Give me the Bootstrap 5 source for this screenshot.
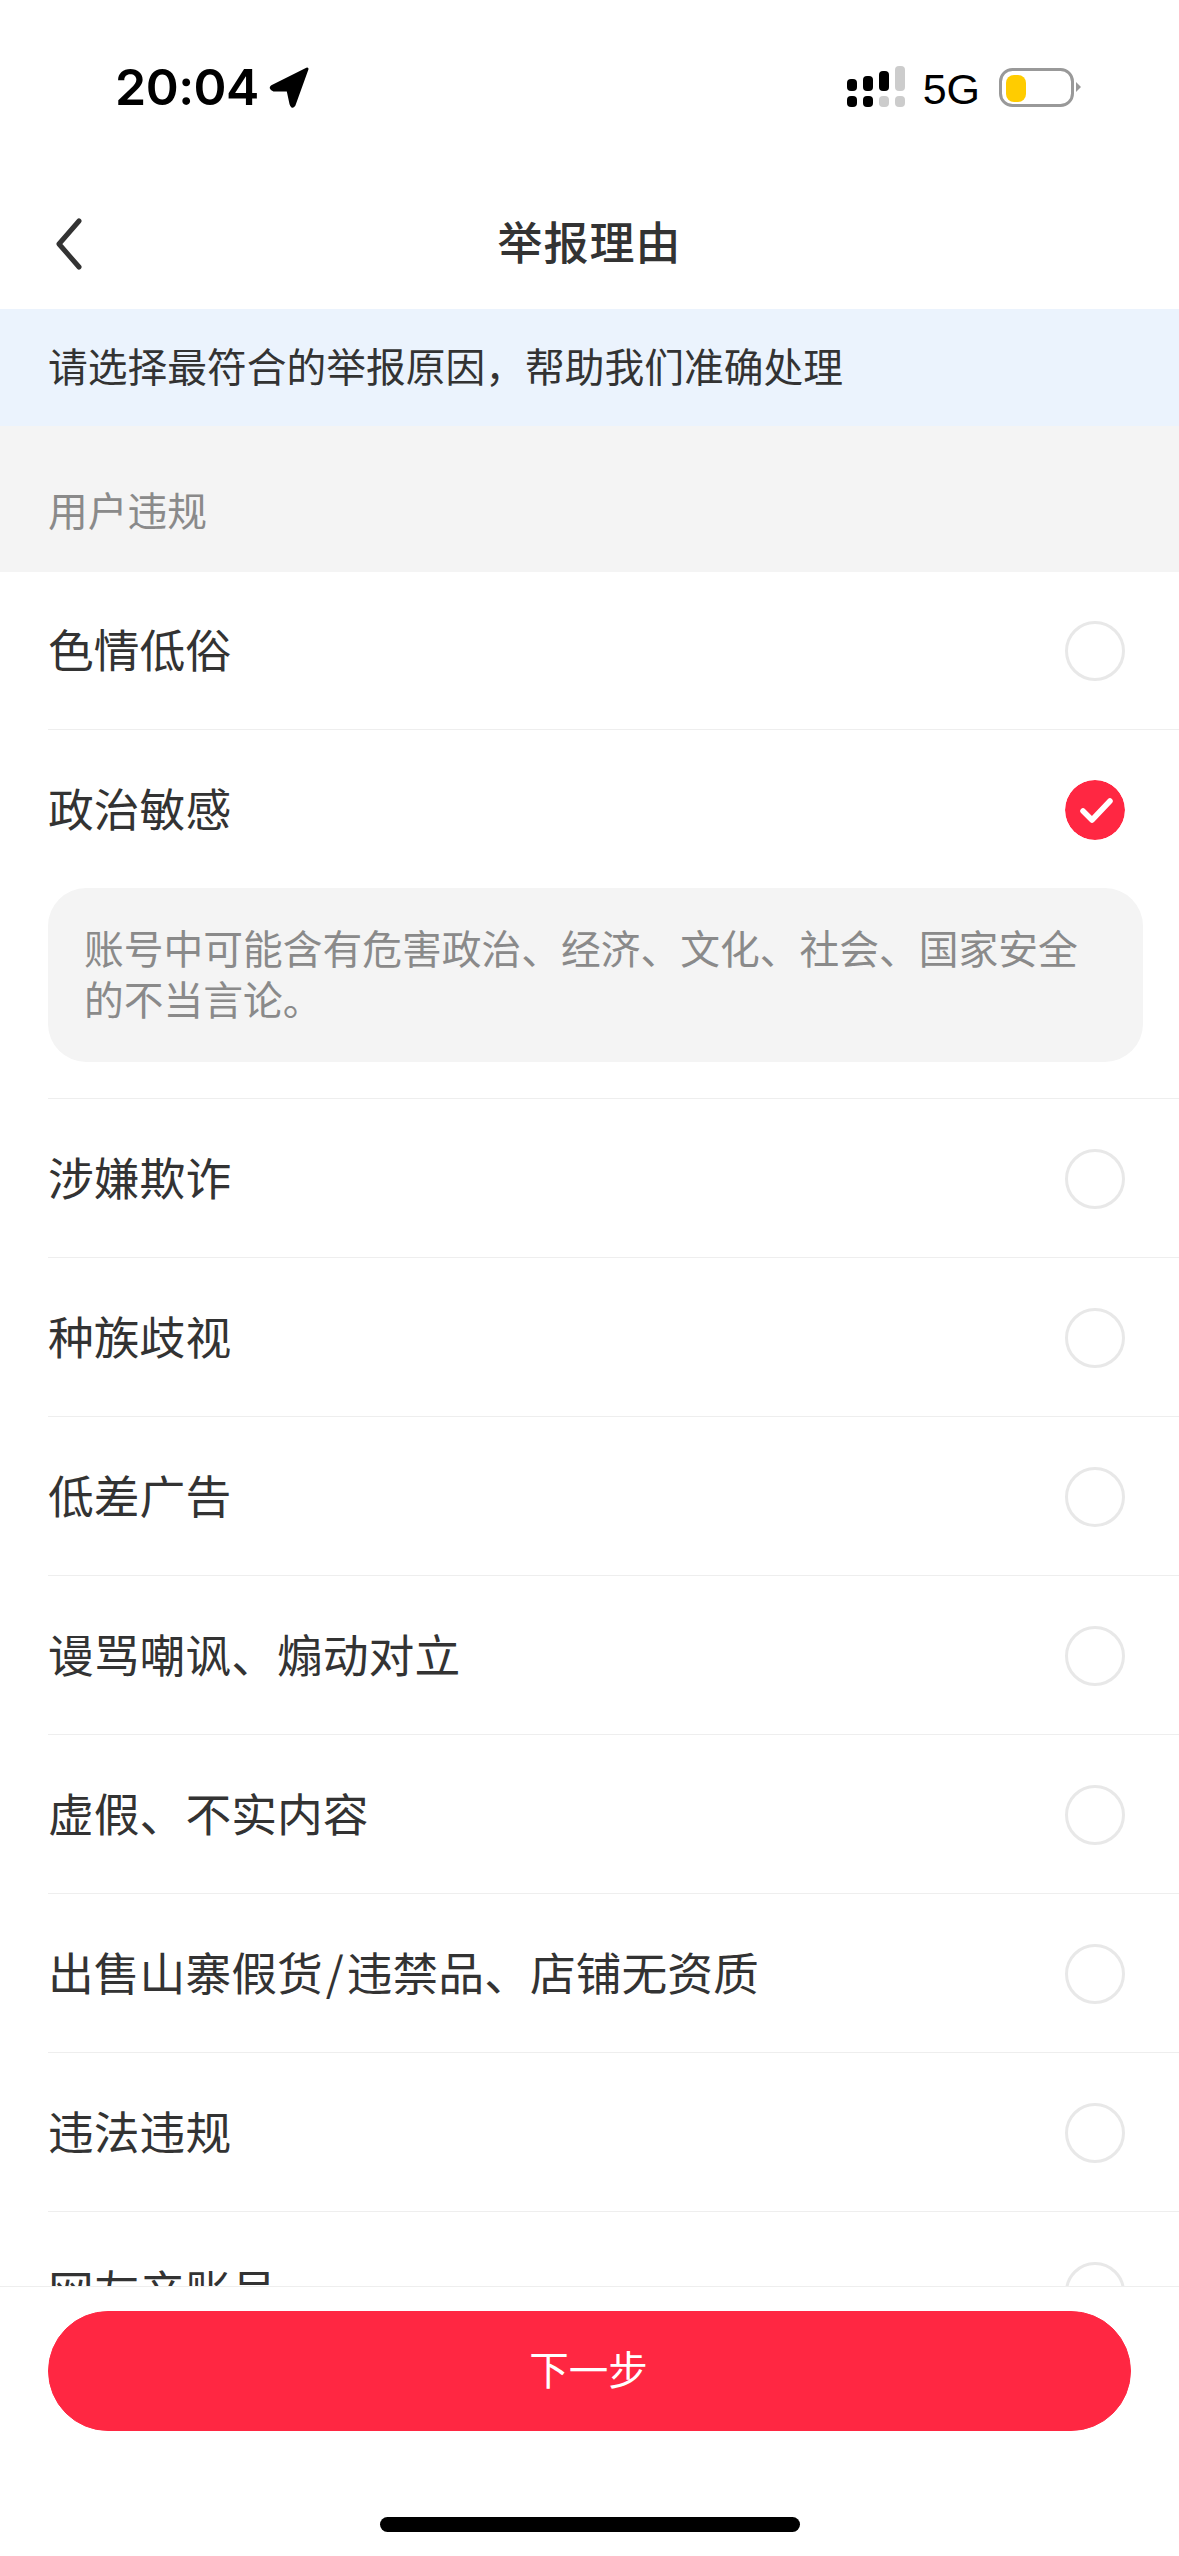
<!DOCTYPE html>
<html lang="zh-CN">
<head>
    <meta charset="UTF-8">
    <meta name="viewport" content="width=device-width, initial-scale=1.0">
    <title>举报理由</title>
    <link rel="stylesheet" href="https://cdn.jsdelivr.net/npm/bootstrap@5.3.0/dist/css/bootstrap.min.css">
    <style>
        body {
            font-family: "Noto Sans CJK SC", "Liberation Sans", sans-serif;
            color: #333;
            background: #fff;
        }
        .page-wrap { height: 2556px; overflow: hidden; }

        .status-bar { height: 176px; padding: 59px 98px 0 115px; }
        .status-time { font-family: Inter, "Liberation Sans", sans-serif; font-weight: 600; font-size: 50px; line-height: 56px; color: #000; letter-spacing: -.5px; }
        .status-arrow { margin-left: 10px; margin-top: 1px; }
        .status-signal { margin-top: 7px; margin-right: 18px; }
        .status-net { font-family: "Liberation Sans", sans-serif; font-size: 43px; line-height: 48px; color: #000; margin-top: 6px; margin-right: 19px; }
        .status-batt { margin-top: 9px; }

        .nav-head { height: 133px; }
        .nav-title { font-size: 45px; font-weight: 500; line-height: 60px; letter-spacing: 1px; margin-top: -4px; }
        .nav-back { left: 48px; top: 41px; }

        .notice-bar { height: 117px; padding: 0 0 6px 48px; font-size: 39.75px; background: #ebf3fd; }
        .group-title { height: 146px; padding: 0 48px 37px; font-size: 39.75px; line-height: 52px; color: #8a8a8a; background: #f4f4f4; }

        .report-list { --bs-list-group-border-width: 0; --bs-list-group-border-radius: 0; margin-top: -1px; }
        .report-item { margin-left: 48px; padding: 0; border-bottom: 1px solid #eee !important; color: #333; }
        .report-row { height: 158px; padding: 2px 54px 0 0; font-size: 45.8px; line-height: 60px; }
        .report-name { padding-bottom: 6px; }
        .name-slash { margin: 0 3px; }
        .radio-dot { width: 60px; height: 60px; border: 3px solid #e8e8e8; border-radius: 50%; flex-shrink: 0; }
        .radio-on { display: block; border: 0; }
        .reason-note { margin: 0 36px 36px 0; padding: 33px 36px 39px; border-radius: 38px; background: #f4f4f4; font-size: 39.75px; line-height: 51px; color: #8a8a8a; }

        .foot-bar { height: 270px; padding: 24px 48px 0; border-top: 1px solid #eee; }
        .next-btn { width: 1083px; height: 120px; padding: 0 2px 6px 0; font-size: 39.5px; background: #ff2742; border-color: #ff2742; color: #fff; }
        .home-line { width: 420px; height: 15px; margin: 86px auto 0; border-radius: 8px; background: #000; }
    </style>
</head>
<body>

    <div class="page-wrap d-flex flex-column">

        <div class="status-bar d-flex justify-content-between align-items-start flex-shrink-0">
            <div class="d-flex align-items-center">
                <span class="status-time">20:04</span>
                <svg class="status-arrow" width="42" height="44" viewBox="0 0 42 44">
                    <path d="M4 20 L38 3 L25 39 Q23 42 22 38 L19 24 L5 24 Q0 22 4 20 Z" fill="#000" stroke="#000" stroke-width="3" stroke-linejoin="round"/>
                </svg>
            </div>
            <div class="d-flex align-items-start">
                <svg class="status-signal" width="58" height="42" viewBox="0 0 58 42">
                    <rect x="0" y="13" width="10" height="12" rx="4" fill="#000"/>
                    <rect x="16" y="10" width="10" height="15" rx="4" fill="#000"/>
                    <rect x="32" y="5" width="10" height="20" rx="4" fill="#000"/>
                    <rect x="48" y="0" width="10" height="25" rx="4" fill="#ccc"/>
                    <rect x="0" y="30" width="10" height="11" rx="4" fill="#000"/>
                    <rect x="16" y="30" width="10" height="11" rx="4" fill="#000"/>
                    <rect x="32" y="30" width="10" height="11" rx="4" fill="#ccc"/>
                    <rect x="48" y="30" width="10" height="11" rx="4" fill="#ccc"/>
                </svg>
                <span class="status-net">5G</span>
                <svg class="status-batt" width="82" height="40" viewBox="0 0 82 40">
                    <rect x="1.5" y="1.5" width="72" height="36" rx="12" fill="none" stroke="#999" stroke-width="3"/>
                    <rect x="7" y="7" width="20" height="27" rx="8" fill="#ffcc00"/>
                    <path d="M77 14 L82 19 L77 24 Z" fill="#999"/>
                </svg>
            </div>
        </div>

        <div class="nav-head position-relative d-flex justify-content-center align-items-center flex-shrink-0">
            <a href="#" class="nav-back position-absolute d-block">
                <svg width="40" height="56" viewBox="0 0 40 56">
                    <path d="M31 4 L11 27 L31 50" fill="none" stroke="#333" stroke-width="5" stroke-linecap="round" stroke-linejoin="round"/>
                </svg>
            </a>
            <div class="nav-title">举报理由</div>
        </div>

        <div class="notice-bar d-flex align-items-center flex-shrink-0">请选择最符合的举报原因，帮助我们准确处理</div>

        <div class="group-title d-flex align-items-end flex-shrink-0">用户违规</div>

        <div class="flex-grow-1 overflow-hidden">
            <ul class="list-group list-group-flush report-list" id="report-list"></ul>
        </div>

        <div class="foot-bar flex-shrink-0">
            <button type="button" class="btn rounded-pill next-btn d-block">下一步</button>
            <div class="home-line"></div>
        </div>

    </div>

    <script src="https://cdn.jsdelivr.net/npm/bootstrap@5.3.0/dist/js/bootstrap.bundle.min.js"></script>
    <script>
        const reasons = ["色情低俗", "政治敏感", "涉嫌欺诈", "种族歧视", "低差广告", "谩骂嘲讽、煽动对立", "虚假、不实内容", "出售山寨假货<span class=\"name-slash\">/</span>违禁品、店铺无资质", "违法违规", "网友产账号"];
        const selected = "政治敏感";
        const note = "账号中可能含有危害政治、经济、文化、社会、国家安全的不当言论。";

        const checkedDot = `<svg class="radio-dot radio-on" viewBox="0 0 60 60">
            <circle cx="30" cy="30" r="30" fill="#ff2742"/>
            <path d="M18 31 L27 40 L45 21" fill="none" stroke="#fff" stroke-width="5.5" stroke-linecap="round" stroke-linejoin="round"/>
        </svg>`;

        document.getElementById("report-list").innerHTML = reasons.map(function(reason) {
            const on = reason === selected;
            return `<li class="list-group-item report-item">
                <div class="report-row d-flex justify-content-between align-items-center">
                    <span class="report-name">${reason}</span>
                    ${on ? checkedDot : '<span class="radio-dot"></span>'}
                </div>
                ${on ? `<div class="reason-note">${note}</div>` : ''}
            </li>`;
        }).join('');
    </script>

</body>
</html>
